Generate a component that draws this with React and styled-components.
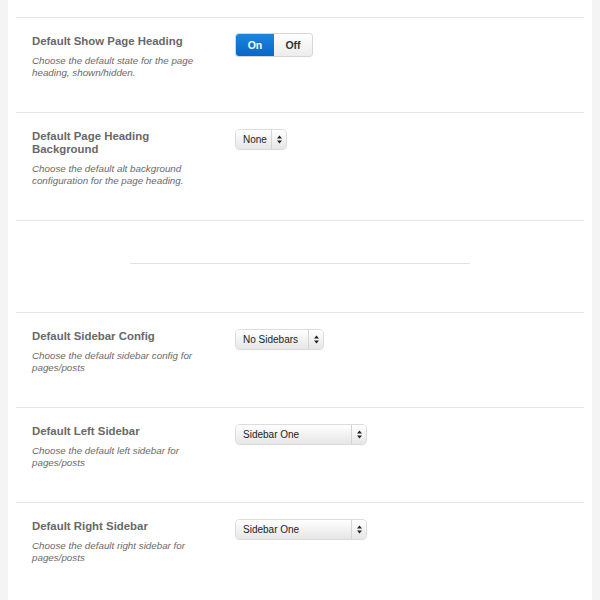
import React from "react";
import styled, { createGlobalStyle } from "styled-components";

const Global = createGlobalStyle`
  html, body { margin: 0; padding: 0; background: #f4f4f4; }
  body { font-family: "Liberation Sans", Arial, Helvetica, sans-serif; }
`;

const Panel = styled.div`
  margin: 0 8px;
  background: #fff;
  min-height: 600px;
  padding: 17px 8px 0;
  box-sizing: border-box;
`;

const Row = styled.div`
  display: flex;
  align-items: flex-start;
  border-top: 1px solid #e5e5e5;
  padding: 17px 16px 33px;
`;

const Label = styled.div`
  width: 174px;
  flex: none;
`;

const Title = styled.div`
  font-size: 11.4px;
  line-height: 13px;
  font-weight: bold;
  color: #686868;
`;

const Desc = styled.div`
  margin-top: 7px;
  font-size: 9.8px;
  line-height: 12px;
  font-style: italic;
  color: #6a6a6a;
`;

const Control = styled.div`
  margin-left: 30px;
  margin-top: -1px;
`;

const Divider = styled.div`
  border-top: 1px solid #e5e5e5;
  padding: 42px 0 48px;
  display: flex;
  justify-content: center;
`;

const Rule = styled.div`
  width: 340px;
  border-top: 1px solid #e2e2e2;
`;

const Toggle = styled.div`
  display: inline-flex;
  width: 76px;
  height: 22px;
  border-radius: 3px;
  box-shadow: 0 0 0 1px #d6d6d6, 0 1px 1px rgba(0,0,0,0.08);
  overflow: hidden;
`;

const Seg = styled.div`
  flex: 1;
  display: flex;
  align-items: center;
  justify-content: center;
  font-size: 10.5px;
  font-weight: bold;
  color: ${(p) => (p.$active ? "#fff" : "#333")};
  background: ${(p) =>
    p.$active
      ? "linear-gradient(#1f86dc, #0767c7)"
      : "linear-gradient(#ffffff, #ececec)"};
`;

const Select = styled.div`
  display: inline-flex;
  align-items: stretch;
  width: ${(p) => p.$w}px;
  height: 19px;
  box-sizing: border-box;
  border-radius: 4px;
  background: linear-gradient(#ffffff, #e6e6e6);
  box-shadow: 0 0 0 1px #dcdcdc, 0 1px 1px rgba(0,0,0,0.12);
  font-size: 10px;
  color: #222;
`;

const SelText = styled.div`
  flex: 1;
  display: flex;
  align-items: center;
  padding-left: 7px;
  white-space: nowrap;
`;

const Arrows = styled.div`
  width: 14px;
  border-left: 1px solid #d4d4d4;
  display: flex;
  align-items: center;
  justify-content: center;
`;

const Caret = () => (
  <svg width="5" height="9" viewBox="0 0 5 9">
    <path d="M2.5 0.5 L5 3.6 L0 3.6 Z" fill="#222" />
    <path d="M2.5 8.5 L5 5.4 L0 5.4 Z" fill="#222" />
  </svg>
);

const Dropdown = ({ w, children }) => (
  <Select $w={w}>
    <SelText>{children}</SelText>
    <Arrows>
      <Caret />
    </Arrows>
  </Select>
);

const Option = ({ title, desc, children }) => (
  <Row>
    <Label>
      <Title>{title}</Title>
      <Desc>{desc}</Desc>
    </Label>
    <Control>{children}</Control>
  </Row>
);

export default function App() {
  return (
    <>
      <Global />
      <Panel>
        <Option
          title="Default Show Page Heading"
          desc="Choose the default state for the page heading, shown/hidden."
        >
          <Toggle>
            <Seg $active>On</Seg>
            <Seg>Off</Seg>
          </Toggle>
        </Option>
        <Option
          title="Default Page Heading Background"
          desc="Choose the default alt background configuration for the page heading."
        >
          <Dropdown w={50}>None</Dropdown>
        </Option>
        <Divider>
          <Rule />
        </Divider>
        <Option
          title="Default Sidebar Config"
          desc="Choose the default sidebar config for pages/posts"
        >
          <Dropdown w={87}>No Sidebars</Dropdown>
        </Option>
        <Option
          title="Default Left Sidebar"
          desc="Choose the default left sidebar for pages/posts"
        >
          <Dropdown w={130}>Sidebar One</Dropdown>
        </Option>
        <Option
          title="Default Right Sidebar"
          desc="Choose the default right sidebar for pages/posts"
        >
          <Dropdown w={130}>Sidebar One</Dropdown>
        </Option>
      </Panel>
    </>
  );
}
